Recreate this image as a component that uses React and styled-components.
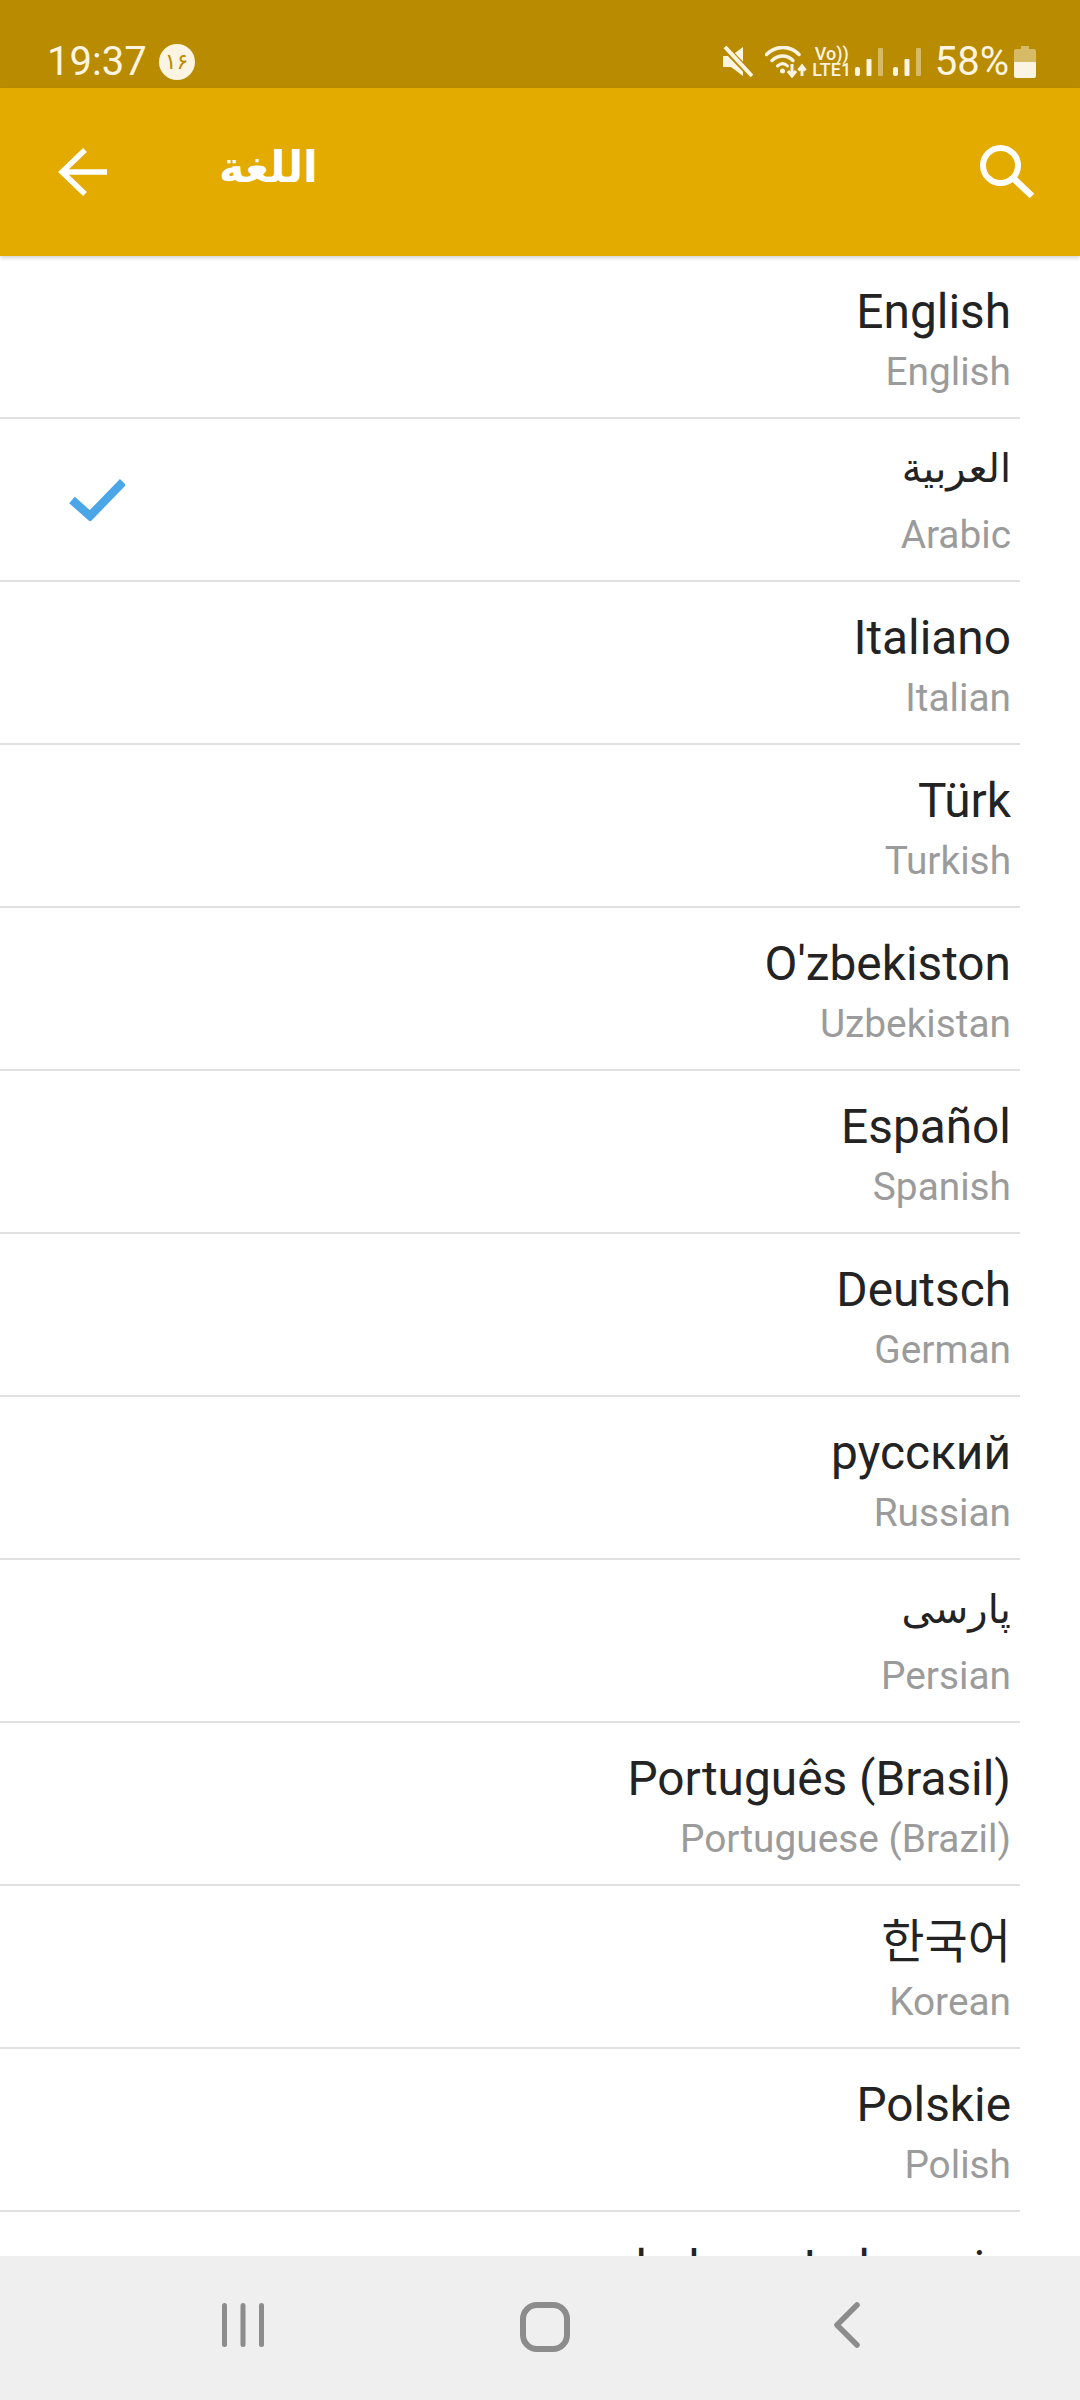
import React from 'react';
import styled, { createGlobalStyle } from 'styled-components';

const GlobalStyle = createGlobalStyle`
  html, body {
    margin: 0;
    padding: 0;
    background: #fff;
  }
  body {
    font-family: Roboto, "DejaVu Sans", "Noto Sans CJK KR", sans-serif;
  }
`;

const Screen = styled.div`
  width: 1080px;
  height: 2400px;
  display: flex;
  flex-direction: column;
  overflow: hidden;
  background: #fff;
`;

const StatusBar = styled.div`
  height: 88px;
  flex: none;
  background: #b88b00;
  color: #fbf4e2;
  display: flex;
  align-items: flex-start;
  padding: 0 44px 0 47px;
  box-sizing: border-box;
`;
const StatusLeft = styled.div`
  display: flex;
  align-items: center;
  height: 47px;
  margin-top: 38px;
`;
const StatusRight = styled.div`
  display: flex;
  align-items: center;
  height: 47px;
  margin-top: 38px;
  margin-left: auto;
`;
const Clock = styled.span`
  font-size: 40px;
  line-height: 47px;
`;
const DateBadge = styled.span`
  width: 36px;
  height: 36px;
  margin-left: 12px;
  border-radius: 50%;
  background: #fbf4e2;
  color: #b88b00;
  font-family: "DejaVu Sans", sans-serif;
  font-size: 22px;
  display: flex;
  align-items: center;
  justify-content: center;
`;
const VoLte = styled.div`
  width: 42px;
  margin-left: 4px;
  display: flex;
  flex-direction: column;
  align-items: center;
  font-size: 18px;
  font-weight: 500;
  line-height: 16px;
`;
const Percent = styled.span`
  font-size: 40px;
  line-height: 47px;
  margin-left: 14px;
`;
const StatusIcon = styled.svg`
  flex: none;
  display: block;
  margin-left: ${p => p.$gap || 0}px;
`;

const Header = styled.header`
  height: 168px;
  flex: none;
  background: #e3ab00;
  display: flex;
  align-items: center;
  padding: 0 46px 0 58px;
  box-sizing: border-box;
  box-shadow: 0 2px 4px rgba(0, 0, 0, 0.18);
  position: relative;
`;
const Title = styled.h1`
  margin: 0 0 0 111px;
  color: #fff;
  font-family: "DejaVu Sans", sans-serif;
  font-size: 43px;
  font-weight: 700;
  line-height: 48px;
  position: relative;
  top: -5px;
`;
const SearchButton = styled.svg`
  display: block;
  margin-left: auto;
`;

const List = styled.main`
  flex: 1;
  min-height: 0;
  overflow: hidden;
`;
const Row = styled.div`
  width: 1020px;
  height: 163px;
  box-sizing: border-box;
  border-bottom: 2px solid #e0e0e0;
  display: flex;
  align-items: center;
`;
const Check = styled.svg`
  display: block;
  margin-left: 69px;
`;
const Labels = styled.div`
  margin-left: auto;
  margin-top: ${p => (p.$foreign ? 22 : 28)}px;
  align-self: flex-start;
  padding-right: 9px;
  text-align: right;
`;
const Name = styled.div`
  font-size: ${p => (p.$foreign ? 40 : p.$cjk ? 47 : 47.8)}px;
  line-height: 56px;
  color: #232323;
  height: ${p => (p.$foreign ? 62 : 56)}px;
`;
const Sub = styled.div`
  margin-top: 9px;
  font-size: 38.8px;
  line-height: 46px;
  color: #9b9b9b;
`;

const NavBar = styled.nav`
  height: 144px;
  flex: none;
  background: #efefef;
  display: flex;
  align-items: flex-start;
  padding: 46px 0 0 222px;
  box-sizing: border-box;
`;
const NavIcon = styled.svg`
  display: block;
  margin-left: ${p => p.$gap || 0}px;
`;

const languages = [
  { name: 'English', sub: 'English' },
  { name: 'العربية', sub: 'Arabic', selected: true, foreign: true },
  { name: 'Italiano', sub: 'Italian' },
  { name: 'Türk', sub: 'Turkish' },
  { name: "O'zbekiston", sub: 'Uzbekistan' },
  { name: 'Español', sub: 'Spanish' },
  { name: 'Deutsch', sub: 'German' },
  { name: 'русский', sub: 'Russian' },
  { name: 'پارسی', sub: 'Persian', foreign: true },
  { name: 'Português (Brasil)', sub: 'Portuguese (Brazil)' },
  { name: '한국어', sub: 'Korean', cjk: true },
  { name: 'Polskie', sub: 'Polish' },
  { name: 'bahasa Indonesia', sub: 'Indonesian' },
];

function SignalBars({ gap }) {
  return (
    <StatusIcon $gap={gap} width="28" height="32" viewBox="0 0 28 32" fill="#fbf4e2">
      <rect x="0" y="21" width="5" height="9" rx="2" />
      <rect x="11.500" y="13" width="5" height="17" rx="1" />
      <rect x="23" y="2" width="5" height="28" rx="1" opacity=".45" />
    </StatusIcon>
  );
}

function StatusIcons() {
  return (
    <StatusRight>
      <StatusIcon width="30" height="32" viewBox="0 0 30 32">
        <path d="M0 10h8l12-9v29L8 21H0z" fill="#fbf4e2" />
        <path d="M0 0l30 31" stroke="#b88b00" strokeWidth="7" />
        <path d="M2 1l27 29" stroke="#fbf4e2" strokeWidth="4" />
      </StatusIcon>
      <StatusIcon $gap={12} width="42" height="32" viewBox="0 0 42 32" fill="none" stroke="#fbf4e2" strokeLinecap="round">
        <path d="M1.500 8.500C11-1 25-1 34 8.500" strokeWidth="3.500" />
        <path d="M7 14.500c6.500-6 15-6 21 0" strokeWidth="3.500" />
        <path d="M12.500 20c3.500-3 7-3 10 0" strokeWidth="3" />
        <circle cx="17.500" cy="25" r="2.500" fill="#fbf4e2" stroke="none" />
        <path d="M27 18v11m-4-4l4 5 4-5M37 30V21m-3.500 3.500L37 20l3.500 4.500" strokeWidth="3" strokeLinecap="butt" />
      </StatusIcon>
      <VoLte>
        <span>Vo))</span>
        <span>LTE1</span>
      </VoLte>
      <SignalBars gap={2} />
      <SignalBars gap={10} />
      <Percent>58%</Percent>
      <StatusIcon $gap={5} width="22" height="32" viewBox="0 0 22 32" fill="#fbf4e2">
        <path d="M7 0h8v3h5a2 2 0 0 1 2 2v11H0V5a2 2 0 0 1 2-2h5z" opacity=".45" />
        <path d="M0 16h22v14a2 2 0 0 1-2 2H2a2 2 0 0 1-2-2z" />
      </StatusIcon>
    </StatusRight>
  );
}

function App() {
  return (
    <Screen>
      <GlobalStyle />
      <StatusBar>
        <StatusLeft>
          <Clock>19:37</Clock>
          <DateBadge>۱۶</DateBadge>
        </StatusLeft>
        <StatusIcons />
      </StatusBar>
      <Header>
        <svg width="50" height="48" viewBox="0 0 50 48" fill="none" stroke="#fff" strokeWidth="5.500">
          <path d="M49 24H4M27 2L4 24l23 22" />
        </svg>
        <Title dir="rtl">اللغة</Title>
        <SearchButton width="54" height="54" viewBox="0 0 54 54" fill="none" stroke="#fff">
          <circle cx="20.500" cy="20.500" r="17.500" strokeWidth="6" />
          <path d="M33 33l19 18" strokeWidth="6.500" />
        </SearchButton>
      </Header>
      <List>
        {languages.map(lang => (
          <Row key={lang.sub}>
            {lang.selected && (
              <Check width="56" height="42" viewBox="0 0 56 42" fill="none" stroke="#4ba6e8" strokeWidth="8.500">
                <path d="M3 21l18 16L54 3" />
              </Check>
            )}
            <Labels $foreign={lang.foreign}>
              <Name $foreign={lang.foreign} $cjk={lang.cjk}>{lang.name}</Name>
              <Sub>{lang.sub}</Sub>
            </Labels>
          </Row>
        ))}
      </List>
      <NavBar>
        <NavIcon width="42" height="46" viewBox="0 0 42 46" fill="#8c8c8c">
          <rect x="0" y="1" width="5" height="44" rx="2.500" />
          <rect x="18.500" y="1" width="5" height="44" rx="2.500" />
          <rect x="37" y="1" width="5" height="44" rx="2.500" />
        </NavIcon>
        <NavIcon $gap={256} width="50" height="50" viewBox="0 0 50 50" fill="none" stroke="#8c8c8c" strokeWidth="6">
          <rect x="3" y="3" width="44" height="44" rx="14" />
        </NavIcon>
        <NavIcon $gap={262} width="28" height="46" viewBox="0 0 28 46" fill="none" stroke="#8c8c8c" strokeWidth="5.500" strokeLinecap="round" strokeLinejoin="round">
          <path d="M25 3L5 23l20 20" />
        </NavIcon>
      </NavBar>
    </Screen>
  );
}

export default App;
